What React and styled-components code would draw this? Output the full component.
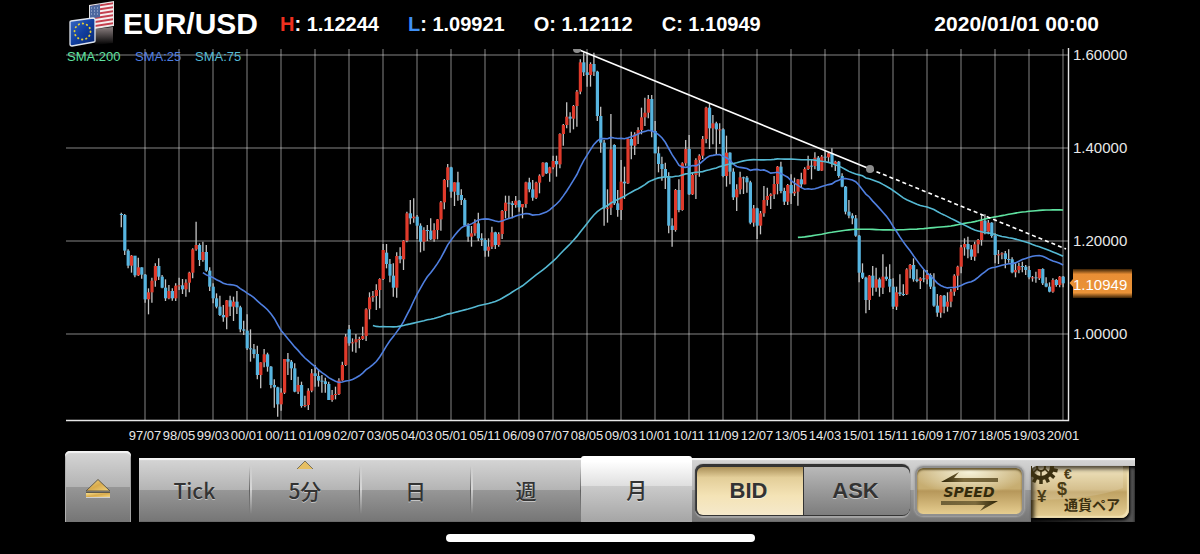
import React, { useState } from "react"
import styled, { createGlobalStyle, css } from "styled-components"

const GlobalStyle = createGlobalStyle`
  body {
    margin: 0;
    background: #000;
    color: #fff;
    font-family: "Liberation Sans", Arial, "Noto Sans CJK JP", sans-serif;
  }
`

const Page = styled.div`
  box-sizing: border-box;
  min-height: 100vh;
  padding: 0 65px;
  display: flex;
  flex-direction: column;
`

const Header = styled.header`
  height: 48px;
  display: flex;
  align-items: center;
  padding: 0 36px 0 2px;
`

const Pair = styled.h1`
  margin: 0 22px 0 5px;
  font-size: 30px;
  line-height: 48px;
`

const Quotes = styled.dl`
  margin: 0;
  display: flex;
  gap: 29px;
  font-size: 20px;
  font-weight: bold;
  white-space: nowrap;
`

const Quote = styled.div`
  display: flex;
  dt {
    color: ${p => p.$color || "#fff"};
  }
  dd {
    margin: 0;
    white-space: pre;
  }
`

const Time = styled.time`
  margin-left: auto;
  font-size: 21px;
  font-weight: bold;
  white-space: nowrap;
`

const ChartSvg = styled.svg`
  display: block;
  width: 100%;
  height: auto;
  overflow: visible;
  font-family: "Liberation Sans", Arial, sans-serif;
`

const Footer = styled.footer`
  display: flex;
  align-items: flex-end;
  gap: 8px;
  margin-top: 7px;
`

const metal = css`
  background: linear-gradient(#d6d6d6, #b4b4b4 50%, #979797 50%, #757575);
`

const gold = css`
  background: linear-gradient(#efe2b8, #cfb67c 45%, #bfa263 50%, #e6cf95);
`

const EjectButton = styled.button`
  ${metal}
  width: 66px;
  height: 71px;
  padding: 8px 0 0;
  border: 0;
  border-radius: 5px 5px 0 0;
  box-shadow: inset 0 2px 1px #f4f4f4, inset 1px 0 #aaa, inset -1px 0 #999;
`

const Bar = styled.div`
  ${metal}
  flex: 1;
  height: 64px;
  display: flex;
  box-shadow: inset 0 2px 1px #f4f4f4, inset 0 -1px #6a6a6a;
`

const Tabs = styled.nav`
  flex: 1;
  display: flex;
`

const Tab = styled.button`
  position: relative;
  flex: 1;
  height: 64px;
  padding: 0;
  border: 0;
  background: linear-gradient(
        transparent 8px,
        rgba(70, 70, 70, 0.7) 50%,
        transparent 56px
      )
      right / 1px 100% no-repeat,
    linear-gradient(
        transparent 8px,
        rgba(255, 255, 255, 0.5) 50%,
        transparent 56px
      )
      left / 2px 100% no-repeat;
  color: #333;
  font: 500 21px/64px "Noto Sans CJK JP", sans-serif;
  text-shadow: 0 1px rgba(255, 255, 255, 0.5);

  &:first-child {
    background-size: 1px 100%, 0 100%;
  }

  ${p =>
    p.$active &&
    css`
      height: 66px;
      margin-top: -2px;
      border-radius: 3px 3px 0 0;
      background: linear-gradient(#fff 8%, #dedede 46%, #cacaca 46%, #a5a5a5);
    `}
`

const TabMark = styled.svg`
  position: absolute;
  top: 2px;
  left: 50%;
  margin-left: -9px;
`

const Sides = styled.div`
  width: 215px;
  height: 51px;
  margin: 7px 4px 0 3px;
  display: flex;
  border-radius: 8px;
  background: #333;
  box-shadow: 0 -1px 1px #222, 0 2px 1px #a5a5a5, inset 1px 0 1px #444;
  overflow: hidden;
`

const Side = styled.button`
  flex: 1;
  margin: 2px 0 1px ${p => (p.$active ? "2px" : "1px")};
  padding: 0 3px 0 0;
  border: 0;
  border-radius: ${p => (p.$active ? "6px 0 0 6px" : "0 7px 7px 0")};
  color: #333;
  font: bold 22px/46px "Liberation Sans", Arial, sans-serif;
  text-shadow: 0 1px rgba(255, 255, 255, 0.5);
  background: ${p =>
    p.$active
      ? "linear-gradient(#a98f58, #e3ce99 22%, #f4e3b6 60%, #f5e9cb)"
      : "linear-gradient(#b9b9b9, #9a9a9a 50%, #7d7d7d)"};
`

const SpeedButton = styled.button`
  width: 109px;
  height: 50px;
  margin: 8px 7px 0 1px;
  padding: 0;
  border: 2px solid #8f8f8f;
  border-radius: 8px;
  background: radial-gradient(
      ellipse 55% 50% at 50% 8%,
      rgba(255, 255, 235, 0.85),
      transparent
    ),
    linear-gradient(#c9b27c, #c7ad70 45%, #b6975a 50%, #e6cd8f);
  box-shadow: inset 0 2px 2px #6b5a30, 0 0 2px 1px #a8a8a8;
`

const PairWell = styled.div`
  flex: none;
  width: 104px;
  height: 56px;
  margin-top: 8px;
  border-top-left-radius: 8px;
  background: linear-gradient(90deg, #111, #555);
  box-shadow: inset 0 2px 3px #000;
`

const PairButton = styled.button`
  ${gold}
  display: block;
  width: 98px;
  height: 52px;
  padding: 0;
  border: 0;
  border-radius: 6px 0 8px 0;
  box-shadow: inset 3px 3px 4px #2a2210, inset -2px -2px 1px #f3e3b4,
    1px 2px 3px #000;
`

const HomeIndicator = styled.div`
  width: 309px;
  height: 8px;
  margin: 12px auto 11px;
  border-radius: 4px;
  background: #fff;
`

// Monthly bars from 1996/12: [high, low, close, open?]. The open is the
// previous close unless it is given. Three units make one chart pixel, counted
// down from `top`.
const SECTIONS = [
  {
    top: 426,
    bars: [
      [68, 112, 75, 72], [72, 195, 182], [178, 235, 227], [195, 248, 197],
      [200, 262, 256], [203, 258, 232], [232, 266, 254], [252, 338, 328],
      [295, 373, 307], [263, 338, 272], [220, 290, 228], [205, 270, 260],
      [255, 295, 293], [268, 333, 325], [285, 328, 303], [295, 332, 325],
      [280, 333, 287], [263, 300, 286], [267, 312, 298], [268, 320, 278],
      [245, 307, 248], [175, 265, 178], [95, 182, 165], [160, 228, 210],
      [155, 215, 186], [165, 245, 242], [232, 303, 290], [280, 340, 325],
      [310, 355, 350], [317, 378, 375], [345, 395, 382], [330, 418, 331],
      [317, 378, 350], [320, 393, 335], [303, 372, 352], [347, 427, 418],
      [392, 435, 422], [373, 480, 475], [418, 515, 478], [462, 505, 492],
      [467, 568, 555], [517, 595, 517], [477, 532, 493], [488, 545, 530],
      [528, 595, 585], [568, 653, 592], [590, 680, 643], [595, 662, 608],
      [507, 612, 507], [489, 555, 515], [510, 570, 535], [520, 607, 605],
      [560, 612, 585], [575, 653, 648], [617, 652, 645], [595, 660, 602],
      [537, 607, 550],
    ],
  },
  {
    top: 246,
    bars: [
      [705, 770, 738], [718, 770, 752], [735, 788, 754], [743, 788, 762],
      [755, 810, 810], [780, 815, 795], [770, 808, 792], [745, 795, 751],
      [695, 752, 705], [612, 708, 620], [585, 647, 640, 598], [625, 665, 637],
      [612, 668, 628], [620, 655, 627], [590, 630, 618], [535, 633, 538],
      [487, 568, 502], [483, 515, 498], [463, 540, 480], [445, 535, 447],
      [342, 450, 360], [342, 415, 402, 368], [387, 457, 437], [400, 500, 473],
      [367, 503, 378], [352, 400, 388], [330, 420, 332], [245, 337, 250],
      [210, 283, 265], [205, 278, 260], [255, 327, 287], [280, 367, 335],
      [292, 362, 300], [285, 333, 302], [265, 330, 328], [280, 335, 300],
      [267, 328, 268], [213, 302, 217], [147, 238, 150], [102, 172, 112],
      [110, 203, 185], [157, 228, 157], [125, 212, 195], [178, 225, 210],
      [205, 290, 287], [280, 335, 320], [288, 350, 310], [268, 317, 280],
      [248, 333, 325], [310, 348, 330], [325, 380, 362], [325, 380, 350],
      [290, 357, 307], [305, 357, 345], [307, 350, 312], [240, 327, 243],
      [197, 265, 218], [197, 265, 220], [213, 265, 225], [198, 233, 212],
      [210, 245, 232], [222, 265, 222], [155, 233, 157], [143, 187, 178],
      [150, 212, 203], [155, 207, 158], [133, 190, 137],
    ],
  },
  {
    top: -24,
    bars: [
      [367, 410, 368], [367, 402, 400], [380, 425, 382], [347, 388, 363],
      [347, 410, 373], [280, 385, 282], [252, 317, 255], [187, 265, 230],
      [217, 278, 236], [195, 268, 198], [150, 260, 155], [58, 163, 67],
      [37, 108, 97], [38, 140, 105], [67, 140, 72], [38, 108, 95],
      [92, 243, 228], [200, 338, 308], [300, 557, 505], [448, 548, 503],
      [222, 525, 328], [313, 495, 490, 315], [450, 530, 510], [360, 540, 425],
      [380, 477, 430], [295, 432, 297], [275, 358, 317], [277, 345, 283],
      [262, 312, 270], [203, 283, 232], [173, 258, 218], [165, 235, 177],
      [165, 292, 273], [243, 340, 340], [320, 397, 372], [350, 422, 387],
      [368, 447, 412], [397, 580, 557], [535, 620, 570], [447, 575, 450],
      [418, 517, 510], [367, 512, 370], [300, 377, 327], [285, 465, 463],
      [397, 465, 405], [355, 477, 360], [343, 410, 347], [288, 357, 297],
      [200, 310, 203], [190, 327, 265], [225, 313, 250], [245, 345, 268],
      [250, 312, 268], [265, 412, 408],
    ],
  },
  {
    top: 126,
    bars: [
      [137, 290, 188], [187, 283, 245], [235, 330, 322], [283, 363, 298],
      [245, 313, 262], [260, 312, 263], [258, 308, 277], [272, 403, 398],
      [345, 410, 355], [353, 447, 407], [363, 433, 370], [288, 380, 330],
      [293, 347, 318], [310, 357, 313], [258, 327, 282], [228, 313, 230],
      [215, 310, 303], [293, 345, 335], [282, 345, 285], [253, 342, 310],
      [263, 318, 305], [267, 347, 268], [248, 293, 283], [232, 283, 237],
      [197, 240, 227], [210, 268, 228], [187, 238, 203], [198, 243, 242],
      [195, 243, 200], [180, 213, 202], [187, 217, 190], [175, 232, 222],
      [212, 243, 215], [213, 263, 258], [250, 292, 290], [288, 373, 365],
      [330, 385, 377], [370, 403, 385], [375, 440, 437], [435, 577, 548],
      [520, 567, 563], [560, 670, 630], [555, 660, 557], [528, 617, 593],
      [533, 605, 568], [563, 620, 593], [493, 612, 560], [530, 572, 567],
      [523, 607, 590],
    ],
  },
  {
    top: 426,
    bars: [
      [265, 357, 350], [290, 360, 307], [253, 318, 312], [283, 318, 313],
      [235, 315, 238], [222, 265, 225], [205, 275, 268], [238, 277, 273],
      [262, 297, 265], [240, 277, 268], [240, 283, 255], [250, 297, 290],
      [250, 350, 347], [312, 380, 368], [315, 383, 317], [315, 370, 350],
      [307, 365, 335], [297, 352, 305], [253, 317, 257], [227, 300, 230],
      [165, 250, 172], [145, 197, 162], [140, 205, 178], [165, 210, 200],
      [155, 212, 163], [147, 190, 150], [73, 167, 92], [73, 133, 125],
      [90, 133, 98], [97, 143, 138], [130, 220, 195], [180, 222, 193],
      [187, 208, 190], [183, 235, 207], [178, 218, 208], [202, 250, 247],
      [220, 262, 240], [218, 250, 228], [215, 247, 230], [225, 255, 240],
      [228, 268, 262], [258, 275, 262], [245, 278, 265], [237, 270, 237],
      [235, 285, 280], [262, 292, 290], [277, 307, 305], [265, 308, 270],
      [267, 290, 285], [258, 292, 260], [258, 292, 280],
    ],
  },
]

const STEP = 3.4
const xAt = i => 121.3 + i * STEP

const BARS = SECTIONS.flatMap(({ top, bars }) =>
  bars.map(bar => bar.map(v => 48 + (top + v) / 3))
).map(([high, low, close, open], i, all) => ({
  x: xAt(i),
  high,
  low,
  close,
  open: open ?? all[i - 1][2],
}))

const sma = length =>
  BARS.slice(length - 1)
    .map((bar, i) => {
      const sum = BARS.slice(i, i + length).reduce((s, b) => s + b.close, 0)
      return `${bar.x.toFixed(1)},${(sum / length).toFixed(1)}`
    })
    .join(" ")

const AVERAGES = [
  { length: 200, color: "#5fe3a1", x: 67 },
  { length: 25, color: "#4f7fe0", x: 135 },
  { length: 75, color: "#55b9d3", x: 195 },
]

const MONTHS = Array.from({ length: 28 }, (_, k) => {
  const month = 6 + k * 10
  const year = (97 + Math.floor(month / 12)) % 100
  const pad = n => String(n).padStart(2, "0")
  return `${pad(year)}/${pad((month % 12) + 1)}`
})

const PRICES = ["1.60000", "1.40000", "1.20000", "1.00000"]

const Chart = () => (
  <ChartSvg viewBox="65 48 1070 396" role="img" aria-label="EUR/USD monthly chart">
    <defs>
      <clipPath id="plot">
        <rect x="66" y="49" width="1002" height="371" />
      </clipPath>
      <linearGradient id="tag" x1="0" x2="0" y1="0" y2="1">
        <stop offset="0" stopColor="#3a2206" />
        <stop offset=".18" stopColor="#e88e35" />
        <stop offset=".82" stopColor="#ea9338" />
        <stop offset="1" stopColor="#3a2206" />
      </linearGradient>
    </defs>

    <g stroke="#fff" strokeOpacity=".26" strokeWidth="2">
      {MONTHS.map((month, k) => (
        <line key={month} x1={145 + k * 34} x2={145 + k * 34} y1="49" y2="420" />
      ))}
      {PRICES.map((price, k) => (
        <line key={price} x1="66" x2="1068" y1={55 + k * 93} y2={55 + k * 93} />
      ))}
    </g>

    <g clipPath="url(#plot)">
      {BARS.map(({ x, high, low }) => (
        <line key={x} x1={x} x2={x} y1={high} y2={low} stroke="#c4c4c4" strokeWidth="1.3" />
      ))}
      {BARS.map(({ x, open, close }) => (
        <rect
          key={x}
          x={x - 1.5}
          y={Math.min(open, close)}
          width="3.2"
          height={Math.max(1, Math.abs(open - close))}
          fill={close <= open ? "#df3a2b" : "#57b5e0"}
        />
      ))}
      {AVERAGES.map(({ length, color }) => (
        <polyline
          key={length}
          points={sma(length)}
          fill="none"
          stroke={color}
          strokeWidth="1.6"
        />
      ))}
      <g stroke="#fff" strokeWidth="1.6">
        <line x1="577" y1="49" x2="870" y2="169" />
        <line x1="870" y1="169" x2="1066" y2="249" strokeDasharray="4 3" />
      </g>
      <circle cx="577" cy="49" r="4" fill="#8c8c8c" />
      <circle cx="870" cy="169" r="4" fill="#8c8c8c" />
    </g>

    <g fontSize="13">
      {AVERAGES.map(({ length, color, x }) => (
        <text key={length} x={x} y="61" fill={color}>
          SMA:{length}
        </text>
      ))}
    </g>

    <path d="M66 420.500H1068.500V48" fill="none" stroke="#e6e6e6" strokeWidth="1.4" />
    <g fontSize="13" fill="#e8e8e8" textAnchor="middle">
      {MONTHS.map((month, k) => (
        <text key={month} x={145 + k * 34} y="440">
          {month}
        </text>
      ))}
    </g>
    <g fontSize="15" fill="#e8e8e8">
      {PRICES.map((price, k) => (
        <text key={price} x="1073" y={60 + k * 93}>
          {price}
        </text>
      ))}
    </g>

    <path d="M1069.500 283L1073 279V287Z" fill="#ea9338" />
    <rect x="1073" y="269" width="59" height="29" fill="url(#tag)" />
    <text x="1073" y="290" fontSize="15" fill="#fff">
      1.10949
    </text>
  </ChartSvg>
)

const Flags = () => (
  <svg width="51" height="48" viewBox="0 0 51 48" aria-hidden="true">
    <defs>
      <linearGradient id="mirror" x1="0" x2="0" y1="0" y2="1">
        <stop offset="0" stopColor="#8a7f80" />
        <stop offset="1" stopColor="#000" />
      </linearGradient>
      <linearGradient id="eu" x1="0" x2="1" y1="0" y2="1">
        <stop offset="0" stopColor="#3a6cc8" />
        <stop offset=".5" stopColor="#123f9f" />
        <stop offset="1" stopColor="#06246e" />
      </linearGradient>
      <clipPath id="us">
        <path d="M23 6L46 2V25L23 29Z" />
      </clipPath>
    </defs>
    <path d="M28 29L46 27V43L28 45Z" fill="url(#mirror)" />
    <path d="M22 5L47 1V26L22 30Z" fill="#e4e4e4" />
    <g clipPath="url(#us)">
      <rect x="22" width="26" height="32" fill="#f6eeee" />
      {[0, 1, 2, 3, 4, 5, 6].map(k => (
        <path key={k} d={`M22 ${7 + k * 4}L47 ${3 + k * 4}`} stroke="#c4404f" strokeWidth="2" />
      ))}
      <path d="M22 4L33 3V17L22 19Z" fill="#4d689f" />
      <path d="M24 8H32M24 11H32M24 14H32" stroke="#b9c6e2" strokeDasharray="1 2" />
    </g>
    <path d="M3 22Q3 21 4 21L26 18Q28 18 28 20V41Q28 42 27 42L5 46Q3 46 3 44Z" fill="url(#eu)" stroke="#dfe5ee" strokeWidth="1.3" />
    <circle
      cx="15.500"
      cy="31.500"
      r="8"
      fill="none"
      stroke="#e3cf35"
      strokeWidth="1.8"
      strokeLinecap="round"
      strokeDasharray=".5 3.690"
    />
  </svg>
)

const GoldStops = () => (
  <>
    <stop offset="0" stopColor="#f7dd8b" />
    <stop offset=".5" stopColor="#d9ab4c" />
    <stop offset="1" stopColor="#f2d581" />
  </>
)

const EjectIcon = () => (
  <svg width="28" height="22" viewBox="0 0 28 22" aria-hidden="true">
    <defs>
      <linearGradient id="eject" x1="0" x2="1" y1="0" y2="1">
        <GoldStops />
      </linearGradient>
    </defs>
    <path d="M14 1.500L26 13H2Z" fill="url(#eject)" stroke="#5d584b" strokeWidth="1" />
    <rect x="2" y="15" width="24" height="4" fill="url(#eject)" />
    <path d="M2 14.500H26" stroke="#5d584b" />
    <path d="M2 19.500H26" stroke="#d0d0d0" />
  </svg>
)

const SpeedArt = () => (
  <svg width="105" height="46" viewBox="0 0 105 46" aria-hidden="true">
    <defs>
      <linearGradient id="arrowL" x1="0" x2="1">
        <stop offset="0" stopColor="#2b2204" />
        <stop offset=".4" stopColor="#7c6a3c" />
        <stop offset="1" stopColor="#6f6037" />
      </linearGradient>
      <linearGradient id="arrowR" x1="1" x2="0">
        <stop offset="0" stopColor="#2b2204" />
        <stop offset=".4" stopColor="#7c6a3c" />
        <stop offset="1" stopColor="#6f6037" />
      </linearGradient>
    </defs>
    <path d="M24 14L42 4L37 10H81V14Z" fill="url(#arrowL)" />
    <path d="M24 33H81L63 43L68 37H24Z" fill="url(#arrowR)" />
    <text
      x="52"
      y="29"
      textAnchor="middle"
      fontSize="14"
      fontWeight="bold"
      fontStyle="italic"
      fontFamily="'DejaVu Sans', Verdana, sans-serif"
      fill="#332a0c"
    >
      SPEED
    </text>
  </svg>
)

const TEETH = Array.from({ length: 14 }, (_, k) => (k * 360) / 14)

const PairArt = () => (
  <svg width="98" height="52" viewBox="0 0 98 52" aria-hidden="true">
    <path d="M0 0H92V22Q60 34 0 34Z" fill="#fff" opacity=".14" />
    <g fill="none" stroke="#3b3010">
      <circle cx="10" cy="1" r="11" strokeWidth="4" />
      {TEETH.map(a => (
        <path
          key={a}
          d="M10 13V18"
          strokeWidth="3.500"
          transform={`rotate(${a} 10 1)`}
        />
      ))}
      <circle cx="10" cy="1" r="4" strokeWidth="2" />
      <path d="M10 5V12M6 3L1 8M14 3L19 8" strokeWidth="1.500" />
    </g>
    <g fill="#4a3c16" fontFamily="'Liberation Sans', Arial, sans-serif" fontWeight="bold">
      <text x="33" y="13" fontSize="14">€</text>
      <text x="26" y="29" fontSize="18">$</text>
      <text x="6" y="36" fontSize="17">¥</text>
    </g>
    <text
      x="33"
      y="44"
      fontSize="14"
      fontWeight="bold"
      fontFamily="'Noto Sans CJK JP', sans-serif"
      fill="#3b3010"
    >
      通貨ペア
    </text>
  </svg>
)

const PERIODS = ["Tick", "5分", "日", "週", "月"]

const App = () => {
  const [period, setPeriod] = useState("月")
  const [side, setSide] = useState("BID")

  return (
    <Page>
      <GlobalStyle />
      <Header>
        <Flags />
        <Pair>EUR/USD</Pair>
        <Quotes>
          <Quote $color="#f0301f">
            <dt>H</dt>
            <dd>: 1.12244</dd>
          </Quote>
          <Quote $color="#3f8ff5">
            <dt>L</dt>
            <dd>: 1.09921</dd>
          </Quote>
          <Quote>
            <dt>O</dt>
            <dd>: 1.12112</dd>
          </Quote>
          <Quote>
            <dt>C</dt>
            <dd>: 1.10949</dd>
          </Quote>
        </Quotes>
        <Time dateTime="2020-01-01T00:00">2020/01/01 00:00</Time>
      </Header>
      <Chart />
      <Footer>
        <EjectButton aria-label="Open menu">
          <EjectIcon />
        </EjectButton>
        <Bar>
          <Tabs>
            {PERIODS.map(name => (
              <Tab key={name} $active={name === period} onClick={() => setPeriod(name)}>
                {name === "5分" && (
                  <TabMark width="18" height="10" viewBox="0 0 18 10" aria-hidden="true">
                    <path d="M9 1L17 9H1Z" fill="#e6bf62" />
                    <path d="M1 9L9 1L17 9" fill="none" stroke="#77705c" />
                  </TabMark>
                )}
                {name}
              </Tab>
            ))}
          </Tabs>
          <Sides>
            {["BID", "ASK"].map(name => (
              <Side key={name} $active={name === side} onClick={() => setSide(name)}>
                {name}
              </Side>
            ))}
          </Sides>
          <SpeedButton aria-label="SPEED">
            <SpeedArt />
          </SpeedButton>
          <PairWell>
            <PairButton aria-label="通貨ペア">
              <PairArt />
            </PairButton>
          </PairWell>
        </Bar>
      </Footer>
      <HomeIndicator />
    </Page>
  )
}

export default App
